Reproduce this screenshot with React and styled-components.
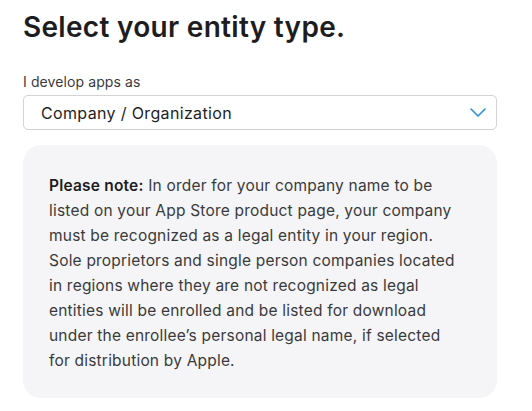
import React from "react";
import styled, { createGlobalStyle } from "styled-components";

const Global = createGlobalStyle`
  html, body { margin: 0; padding: 0; background: #fff; }
  body { font-family: Inter, "Noto Sans", sans-serif; color: #1d1d1f; -webkit-font-smoothing: antialiased; }
`;

const Page = styled.div`
  width: 532px;
  box-sizing: border-box;
  padding: 9px 35px 0 23px;
  display: flex;
  flex-direction: column;
`;

const Title = styled.h1`
  margin: 0;
  font-size: 28px;
  font-weight: 600;
  line-height: 36px;
  letter-spacing: 0.3px;
  color: #1d1d1f;
`;

const Field = styled.div`
  margin-top: 28px;
  display: flex;
  flex-direction: column;
  gap: 4px;
`;

const Label = styled.label`
  font-size: 14px;
  line-height: 18px;
  letter-spacing: 0.1px;
  color: #3a3a3c;
`;

const SelectBox = styled.div`
  height: 35px;
  box-sizing: border-box;
  border: 1px solid #d2d2d7;
  border-radius: 5px;
  display: flex;
  align-items: center;
  justify-content: space-between;
  padding: 0 10px 0 17px;
  font-size: 16px;
  letter-spacing: 0.35px;
  color: #1d1d1f;
`;

const Card = styled.div`
  margin-top: 15px;
  background: #f5f5f7;
  border-radius: 18px;
  padding: 28px 40px 25px 26px;
  font-size: 15.5px;
  line-height: 25px;
  letter-spacing: 0.2px;
  color: #3a3a3c;
`;

const Strong = styled.strong`
  font-weight: 600;
  color: #1d1d1f;
`;

export default function App() {
  return (
    <>
      <Global />
      <Page>
        <Title>Select your entity type.</Title>
        <Field>
          <Label>I develop apps as</Label>
          <SelectBox>
            <span>Company / Organization</span>
            <svg width="16" height="9" viewBox="0 0 16 9" fill="none">
              <path d="M1 1l7 7 7-7" stroke="#2f8fd8" strokeWidth="1.6" strokeLinecap="round" strokeLinejoin="round" />
            </svg>
          </SelectBox>
        </Field>
        <Card>
          <Strong>Please note:</Strong> In order for your company name to be listed on your App Store product page, your company must be recognized as a legal entity in your region. Sole proprietors and single person companies located in regions where they are not recognized as legal entities will be enrolled and be listed for download under the enrollee’s personal legal name, if selected for distribution by Apple.
        </Card>
      </Page>
    </>
  );
}
